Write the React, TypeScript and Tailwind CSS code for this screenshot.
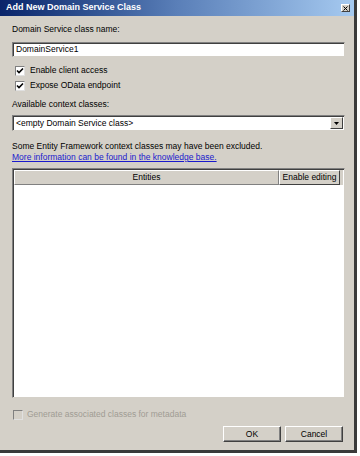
import React from 'react';

const font = { fontFamily: '"Liberation Sans", Arial, sans-serif' };

const Check = ({ checked, disabled }: { checked?: boolean; disabled?: boolean }) => (
  <div
    className={`w-[10px] h-[10px] border border-t-[#808080] border-l-[#808080] border-r-[#e0e0e0] border-b-[#e0e0e0] flex items-center justify-center ${
      disabled ? 'bg-[#d4d0c8]' : 'bg-white'
    }`}
  >
    {checked && (
      <svg width="8" height="8" viewBox="0 0 8 8">
        <path d="M1 3.5 L3 5.5 L7 1.5" stroke="#000" strokeWidth="1.6" fill="none" />
      </svg>
    )}
  </div>
);

const Button = ({ label }: { label: string }) => (
  <button className="w-[58px] h-[16px] bg-[#d4d0c8] border border-t-white border-l-white border-r-[#404040] border-b-[#404040] shadow-[inset_-1px_-1px_0_#808080] text-[8.5px] text-black">
    {label}
  </button>
);

const App = () => {
  return (
    <div className="w-[360px] h-[456px] bg-white" style={font}>
      <div className="w-[357px] h-[453px] bg-[#d4d0c8] border-r-[3px] border-b-[3px] border-[#3a3a3a] flex flex-col text-[8.5px] text-black">
        {/* Title bar */}
        <div className="h-[16px] flex items-center justify-between pl-[6px] pr-[4px] bg-gradient-to-r from-[#0a246a] via-[#5a7fb8] to-[#a6caf0]">
          <span className="text-white font-bold text-[9px]">Add New Domain Service Class</span>
          <div className="w-[9px] h-[8px] bg-[#d4d0c8] border border-t-white border-l-white border-r-[#404040] border-b-[#404040] flex items-center justify-center">
            <svg width="5" height="5" viewBox="0 0 5 5">
              <path d="M0.5 0.5 L4.5 4.5 M4.5 0.5 L0.5 4.5" stroke="#000" strokeWidth="1" />
            </svg>
          </div>
        </div>

        <div className="flex flex-col pl-[12px] pr-[9px]">
          <div className="mt-[7px] h-[12px] leading-[12px]">Domain Service class name:</div>
          <div className="mt-[7px] h-[15px] bg-white border border-t-[#808080] border-l-[#808080] border-r-[#d4d0c8] border-b-[#d4d0c8] shadow-[inset_1px_1px_0_#404040] flex items-center pl-[3px]">
            DomainService1
          </div>

          <div className="mt-[8px] flex items-center gap-[5px] pl-[3px] h-[11px]">
            <Check checked />
            <span>Enable client access</span>
          </div>
          <div className="mt-[4px] flex items-center gap-[5px] pl-[3px] h-[11px]">
            <Check checked />
            <span>Expose OData endpoint</span>
          </div>

          <div className="mt-[7px] h-[12px] leading-[12px]">Available context classes:</div>
          <div className="mt-[5px] h-[16px] bg-white border border-t-[#808080] border-l-[#808080] border-r-[#d4d0c8] border-b-[#d4d0c8] shadow-[inset_1px_1px_0_#404040] flex items-center justify-between pl-[3px] pr-[1px]">
            <span>&lt;empty Domain Service class&gt;</span>
            <div className="w-[13px] h-[12px] bg-[#d4d0c8] border border-t-white border-l-white border-r-[#404040] border-b-[#404040] flex items-center justify-center">
              <svg width="5" height="3" viewBox="0 0 5 3">
                <path d="M0 0 L5 0 L2.5 3 Z" fill="#000" />
              </svg>
            </div>
          </div>

          <div className="mt-[10px] h-[11px] leading-[11px]">
            Some Entity Framework context classes may have been excluded.
          </div>
          <div className="h-[11px] leading-[11px] text-[#1a1acd] underline">
            More information can be found in the knowledge base.
          </div>

          {/* Table */}
          <div className="mt-[5px] h-[230px] bg-white border border-t-[#808080] border-l-[#808080] border-r-[#d4d0c8] border-b-[#d4d0c8] shadow-[inset_1px_1px_0_#404040] p-[1px] flex flex-col">
            <div className="h-[15px] flex bg-[#d4d0c8] pr-[3px]">
              <div className="flex-1 border border-t-white border-l-white border-r-[#808080] border-b-[#808080] flex items-center justify-center">
                Entities
              </div>
              <div className="w-[61px] border border-t-white border-l-white border-r-[#404040] border-b-[#404040] flex items-center justify-center">
                Enable editing
              </div>
            </div>
          </div>

          <div className="mt-[11px] flex items-center gap-[4px] pl-[1px] h-[11px] text-[#a09c94]">
            <Check disabled />
            <span>Generate associated classes for metadata</span>
          </div>

          <div className="mt-[6px] flex justify-end gap-[4px] pr-[2px]">
            <Button label="OK" />
            <Button label="Cancel" />
          </div>
        </div>
      </div>
    </div>
  );
};

export default App;
